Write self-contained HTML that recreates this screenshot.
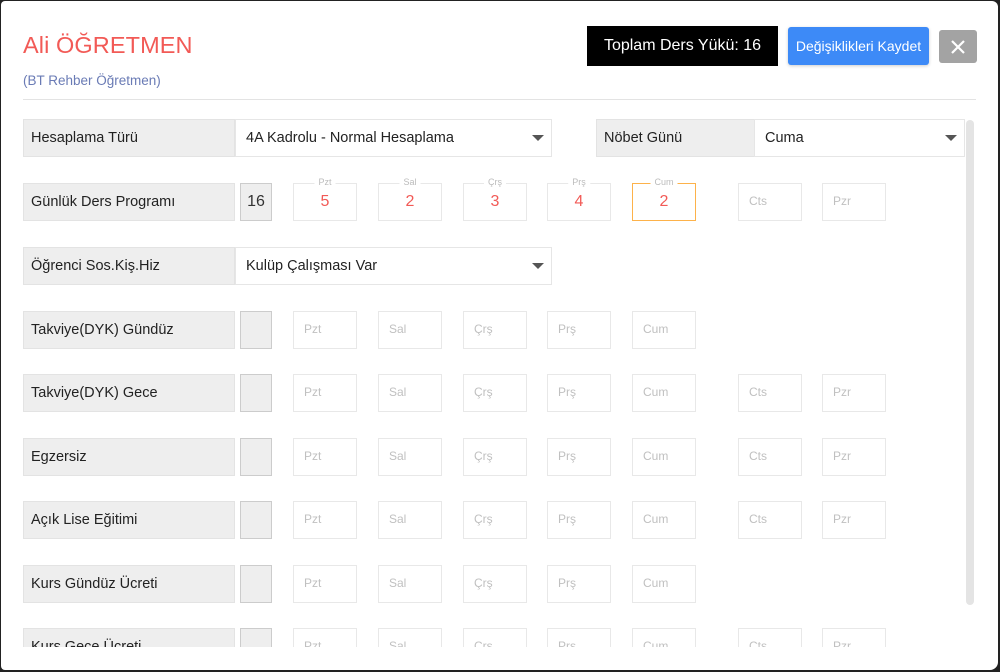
<!DOCTYPE html>
<html><head><meta charset="utf-8"><style>
*{box-sizing:border-box;margin:0;padding:0}
html,body{width:1000px;height:672px;overflow:hidden;background:#222}
body{font-family:"Segoe UI","Liberation Sans","DejaVu Sans",sans-serif;}
.frame{position:absolute;left:1px;top:1px;width:997px;height:669px;background:#fff;border-radius:4px 6px 8px 4px;overflow:hidden}
.a{position:absolute}
.title{left:22px;top:31px;font-size:23.5px;color:#f25a56;letter-spacing:0.1px}
.sub{left:22px;top:72px;font-size:13.5px;color:#6a7bb5}
.hr{left:22px;top:98px;width:953px;height:1px;background:#e3e3e3}
.tot{left:586px;top:25px;width:191px;height:40px;background:#000;color:#fff;font-size:16px;line-height:40px;text-align:center}
.save{left:787px;top:26px;width:141px;height:38px;background:#3d8af7;color:#fff;font-size:14px;line-height:38px;text-align:center;border-radius:3px;box-shadow:0 1px 3px rgba(0,0,0,.2)}
.close{left:938px;top:29px;width:38px;height:33px;background:#a3a3a3;border-radius:3px}
.clip{left:0;top:110px;width:997px;height:536px;overflow:hidden}
.lab{position:absolute;width:212px;height:38px;background:#eee;border:1px solid #e3e3e3;font-size:14.5px;color:#222;line-height:36px;padding-left:7px}
.sel{position:absolute;height:38px;background:#fff;border:1px solid #e6e6e6;font-size:14.5px;color:#222;line-height:36px;padding-left:10px}
.sel:after{content:"";position:absolute;right:7px;top:15px;border-left:6px solid transparent;border-right:6px solid transparent;border-top:6px solid #555}
.chk{position:absolute;width:32px;height:38px;background:#eee;border:1.5px solid #ccc;font-size:16px;color:#333;line-height:35px;text-align:center}
.box{position:absolute;width:64px;height:38px;border:1.5px solid #e8e8e8;font-size:12px;color:#c0c0c0;line-height:35px;padding-left:10px}
.val{text-align:center;padding:0;color:#f25a56;font-size:16px;line-height:36px}
.val span{position:absolute;top:-8px;left:50%;transform:translateX(-50%);background:#fff;font-size:9px;color:#bbb;line-height:12px;padding:0 4px}
.or{border-color:#fdb24a}
.sb{left:965px;top:119px;width:8px;height:485px;background:#e4e4e4;border-radius:4px}
</style></head><body><div class="frame">
<div class="a title">Ali ÖĞRETMEN</div>
<div class="a sub">(BT Rehber Öğretmen)</div>
<div class="a hr"></div>
<div class="a tot">Toplam Ders Yükü: 16</div>
<div class="a save">Değişiklikleri Kaydet</div>
<div class="a close"><svg width="38" height="33"><path d="M13 11L25 23M25 11L13 23" stroke="#fff" stroke-width="2.2"/></svg></div>
<div class="a sb"></div>
<div class="a clip">
<div class="lab" style="left:22px;top:8px">Hesaplama Türü</div>
<div class="sel" style="left:234px;top:8px;width:317px">4A Kadrolu - Normal Hesaplama</div>
<div class="lab" style="left:595px;top:8px;width:160px">Nöbet Günü</div>
<div class="sel" style="left:753px;top:8px;width:211px">Cuma</div>

<div class="lab" style="left:22px;top:72px">Günlük Ders Programı</div>
<div class="chk" style="left:239px;top:72px">16</div>
<div class="box val" style="left:292px;top:72px">5<span>Pzt</span></div>
<div class="box val" style="left:377px;top:72px">2<span>Sal</span></div>
<div class="box val" style="left:462px;top:72px">3<span>Çrş</span></div>
<div class="box val" style="left:546px;top:72px">4<span>Prş</span></div>
<div class="box val or" style="left:631px;top:72px">2<span>Cum</span></div>
<div class="box" style="left:737px;top:72px">Cts</div>
<div class="box" style="left:821px;top:72px">Pzr</div>

<div class="lab" style="left:22px;top:136px">Öğrenci Sos.Kiş.Hiz</div>
<div class="sel" style="left:234px;top:136px;width:317px">Kulüp Çalışması Var</div>

<div class="lab" style="left:22px;top:200px">Takviye(DYK) Gündüz</div>
<div class="chk" style="left:239px;top:200px"></div>
<div class="box" style="left:292px;top:200px">Pzt</div><div class="box" style="left:377px;top:200px">Sal</div><div class="box" style="left:462px;top:200px">Çrş</div><div class="box" style="left:546px;top:200px">Prş</div><div class="box" style="left:631px;top:200px">Cum</div>

<div class="lab" style="left:22px;top:263px">Takviye(DYK) Gece</div>
<div class="chk" style="left:239px;top:263px"></div>
<div class="box" style="left:292px;top:263px">Pzt</div><div class="box" style="left:377px;top:263px">Sal</div><div class="box" style="left:462px;top:263px">Çrş</div><div class="box" style="left:546px;top:263px">Prş</div><div class="box" style="left:631px;top:263px">Cum</div><div class="box" style="left:737px;top:263px">Cts</div><div class="box" style="left:821px;top:263px">Pzr</div>

<div class="lab" style="left:22px;top:327px">Egzersiz</div>
<div class="chk" style="left:239px;top:327px"></div>
<div class="box" style="left:292px;top:327px">Pzt</div><div class="box" style="left:377px;top:327px">Sal</div><div class="box" style="left:462px;top:327px">Çrş</div><div class="box" style="left:546px;top:327px">Prş</div><div class="box" style="left:631px;top:327px">Cum</div><div class="box" style="left:737px;top:327px">Cts</div><div class="box" style="left:821px;top:327px">Pzr</div>

<div class="lab" style="left:22px;top:390px">Açık Lise Eğitimi</div>
<div class="chk" style="left:239px;top:390px"></div>
<div class="box" style="left:292px;top:390px">Pzt</div><div class="box" style="left:377px;top:390px">Sal</div><div class="box" style="left:462px;top:390px">Çrş</div><div class="box" style="left:546px;top:390px">Prş</div><div class="box" style="left:631px;top:390px">Cum</div><div class="box" style="left:737px;top:390px">Cts</div><div class="box" style="left:821px;top:390px">Pzr</div>

<div class="lab" style="left:22px;top:454px">Kurs Gündüz Ücreti</div>
<div class="chk" style="left:239px;top:454px"></div>
<div class="box" style="left:292px;top:454px">Pzt</div><div class="box" style="left:377px;top:454px">Sal</div><div class="box" style="left:462px;top:454px">Çrş</div><div class="box" style="left:546px;top:454px">Prş</div><div class="box" style="left:631px;top:454px">Cum</div>

<div class="lab" style="left:22px;top:517px">Kurs Gece Ücreti</div>
<div class="chk" style="left:239px;top:517px"></div>
<div class="box" style="left:292px;top:517px">Pzt</div><div class="box" style="left:377px;top:517px">Sal</div><div class="box" style="left:462px;top:517px">Çrş</div><div class="box" style="left:546px;top:517px">Prş</div><div class="box" style="left:631px;top:517px">Cum</div><div class="box" style="left:737px;top:517px">Cts</div><div class="box" style="left:821px;top:517px">Pzr</div>
</div>
</div></body></html>
